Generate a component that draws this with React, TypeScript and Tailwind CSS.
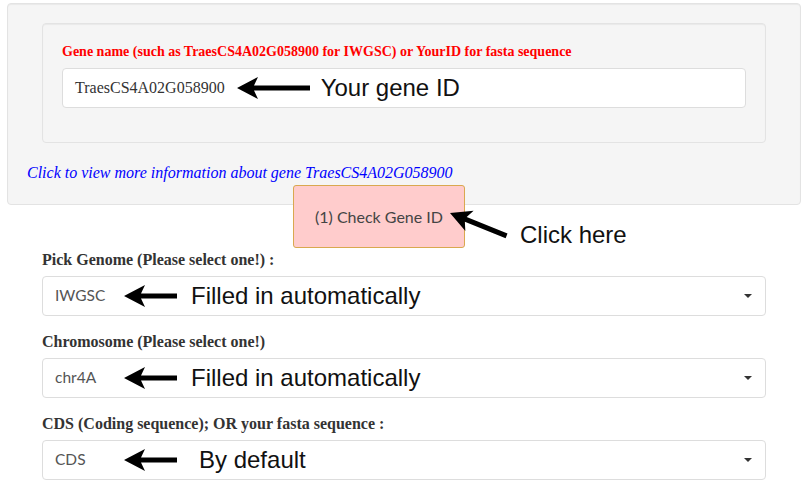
const serif = { fontFamily: '"Liberation Serif", "Times New Roman", serif' };

const LeftArrow = ({ w }: { w: number }) => (
  <svg width={w} height={24} viewBox={`0 0 ${w} 24`} className="shrink-0">
    <path d={`M0 12 L21 1 L17 9.5 L${w} 9.5 L${w} 14.5 L17 14.5 L21 23 Z`} fill="#000" />
  </svg>
);

const Note = ({ children, className = '' }: { children: React.ReactNode; className?: string }) => (
  <span className={`text-[24px] leading-[28px] text-[#111] font-['Liberation_Sans',Arial,sans-serif] whitespace-nowrap ${className}`}>
    {children}
  </span>
);

const SelectField = ({ label, value, note, noteGap }: { label: string; value: string; note: string; noteGap: string }) => (
  <div className="w-[724px]">
    <label className="block h-[22px] text-[16px] leading-[22px] font-bold text-[#333] font-['Liberation_Serif',serif]">
      {label}
    </label>
    <div className="mt-[5px] h-[40px] flex items-center bg-white border border-[#ddd] rounded pl-[12px] pr-[13px]">
      <span className="w-[69px] text-[15.5px] text-[#555] font-['Lato',sans-serif]">{value}</span>
      <LeftArrow w={53} />
      <Note className={noteGap}>{note}</Note>
      <span className="ml-auto w-0 h-0 border-l-[4px] border-r-[4px] border-t-[4px] border-l-transparent border-r-transparent border-t-[#333]" />
    </div>
  </div>
);

export default function App() {
  return (
    <div className="w-[812px] h-[487px] bg-white overflow-hidden">
      <div className="ml-[7px] mt-[3px] w-[794px] h-[202px] bg-[#f5f5f5] border border-[#e3e3e3] rounded pt-[19px] px-[19px] shadow-[inset_0_1px_1px_rgba(0,0,0,0.05)]">
        <div className="mx-[15px] h-[120px] bg-[#f5f5f5] border border-[#e3e3e3] rounded px-[19px] pt-[18px] shadow-[inset_0_1px_1px_rgba(0,0,0,0.05)]">
          <label className="block text-[14px] leading-[20px] font-bold text-[#ff0000]" style={serif}>
            Gene name (such as TraesCS4A02G058900 for IWGSC) or YourID for fasta sequence
          </label>
          <div className="mt-[6px] h-[40px] flex items-center bg-white border border-[#ddd] rounded pl-[12px]">
            <span className="text-[16px] text-[#333]" style={serif}>TraesCS4A02G058900</span>
            <span className="ml-[12px]"><LeftArrow w={73} /></span>
            <Note className="ml-[11px]">Your gene ID</Note>
          </div>
        </div>
        <a className="block mt-[20px] text-[16px] leading-[20px] italic text-[#0000ff]" style={serif}>
          Click to view more information about gene TraesCS4A02G058900
        </a>
      </div>

      <div className="relative z-10 flex -mt-[20px] ml-[293px]">
        <button className="w-[172px] h-[63px] shrink-0 bg-[#ffcccc] border border-[#d9a84f] rounded-[3px] text-[16px] text-[#444] font-['Lato',sans-serif]">
          (1) Check Gene ID
        </button>
        <svg width={64} height={34} viewBox="0 0 64 34" className="shrink-0 -ml-[17px] mt-[23px]">
          <g transform="translate(2,5) rotate(22)">
            <path d="M0 0 L21 -11 L17 -2.5 L61 -2.5 L61 2.5 L17 2.5 L21 11 Z" fill="#000" />
          </g>
        </svg>
        <Note className="ml-[8px] mt-[36px]">Click here</Note>
      </div>

      <div className="ml-[42px] flex flex-col gap-[15px]">
        <SelectField label="Pick Genome (Please select one!) :" value="IWGSC" note="Filled in automatically" noteGap="ml-[14px]" />
        <SelectField label="Chromosome (Please select one!)" value="chr4A" note="Filled in automatically" noteGap="ml-[14px]" />
        <SelectField label="CDS (Coding sequence); OR your fasta sequence :" value="CDS" note="By default" noteGap="ml-[22px]" />
      </div>
    </div>
  );
}
